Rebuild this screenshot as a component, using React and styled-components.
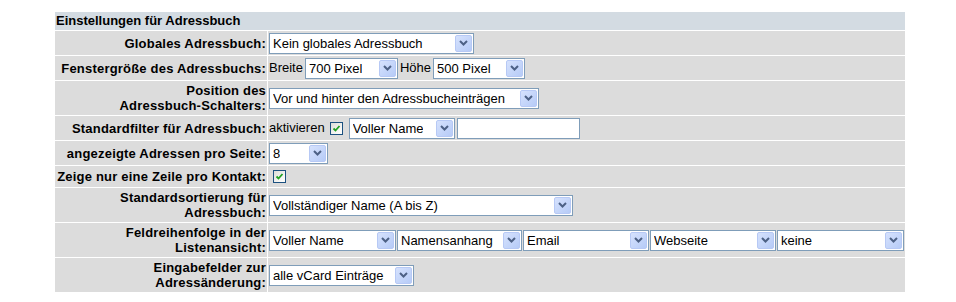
import React from 'react';
import styled, { createGlobalStyle } from 'styled-components';

const GlobalStyle = createGlobalStyle`
  body {
    margin: 0;
    background: #fff;
    font-family: 'Liberation Sans', Arial, sans-serif;
    font-size: 13px;
    color: #000;
  }
`;

const Table = styled.table`
  border-collapse: separate;
  border-spacing: 1px;
  width: 852px;
  margin: 11px 0 0 54px;
  background: #fff;
`;

const HeaderCell = styled.td`
  background: #d3dbe2;
  font-weight: bold;
  height: 18px;
  padding: 0 0 0 1px;
  line-height: 16px;
  text-align: left;
`;

const LabelCell = styled.td`
  width: 211px;
  background: #dcdcdc;
  font-weight: bold;
  letter-spacing: 0.2px;
  text-align: right;
  vertical-align: middle;
  line-height: 15px;
  padding: 0 1px 0 0;
  height: ${p => p.$h || 24}px;
`;

const ValueCell = styled.td`
  background: #dcdcdc;
  vertical-align: middle;
  padding: 0 0 0 1px;
`;

const Controls = styled.div`
  display: flex;
  align-items: center;
  gap: ${p => p.$gap ?? 4}px;
`;

const Text = styled.span`
  line-height: 16px;
  margin-right: ${p => p.$mr || 0}px;
`;

const SelectBox = styled.div`
  box-sizing: border-box;
  width: ${p => p.$w}px;
  height: 21px;
  border: 1px solid #7f9db9;
  background: #fff;
  display: flex;
  align-items: center;
  justify-content: space-between;
  padding: 0 1px 0 3px;
  flex-shrink: 0;
`;

const SelectLabel = styled.span`
  white-space: nowrap;
  overflow: hidden;
  line-height: 17px;
`;

const ArrowButton = styled.span`
  box-sizing: border-box;
  width: 17px;
  height: 17px;
  border: 1px solid #b7c9f5;
  border-radius: 2px;
  background: linear-gradient(135deg, #d6e2fd 0%, #b6cbf7 100%);
  display: flex;
  align-items: center;
  justify-content: center;
  flex-shrink: 0;
`;

const TextInput = styled.div`
  box-sizing: border-box;
  width: ${p => p.$w}px;
  height: 21px;
  border: 1px solid #7f9db9;
  background: #fff;
  margin-left: ${p => p.$ml || 0}px;
`;

const CheckBox = styled.span`
  box-sizing: border-box;
  width: 13px;
  height: 13px;
  border: 1px solid #1c5180;
  background: linear-gradient(135deg, #dcdcd7 0%, #fbfbf9 80%);
  display: flex;
  align-items: center;
  justify-content: center;
  margin: 0 ${p => p.$mr ?? 3}px 0 ${p => p.$ml ?? 4}px;
  flex-shrink: 0;
`;

function Select({ w, children }) {
  return (
    <SelectBox $w={w}>
      <SelectLabel>{children}</SelectLabel>
      <ArrowButton>
        <svg width="9" height="6" viewBox="0 0 9 6">
          <path d="M1 1 L4.5 4.5 L8 1" fill="none" stroke="#4d6185" strokeWidth="2" />
        </svg>
      </ArrowButton>
    </SelectBox>
  );
}

function Check({ ml, mr }) {
  return (
    <CheckBox $ml={ml} $mr={mr}>
      <svg width="9" height="9" viewBox="0 0 9 9">
        <path d="M1.5 4.5 L3.5 6.5 L7.5 2" fill="none" stroke="#21a121" strokeWidth="1.8" />
      </svg>
    </CheckBox>
  );
}

const columns = [
  { label: 'Voller Name', w: 127 },
  { label: 'Namensanhang', w: 125 },
  { label: 'Email', w: 126 },
  { label: 'Webseite', w: 126 },
  { label: 'keine', w: 127 },
];

export default function App() {
  return (
    <>
      <GlobalStyle />
      <Table>
        <tbody>
          <tr>
            <HeaderCell colSpan={2}>Einstellungen für Adressbuch</HeaderCell>
          </tr>
          <tr>
            <LabelCell>Globales Adressbuch:</LabelCell>
            <ValueCell>
              <Controls>
                <Select w={205}>Kein globales Adressbuch</Select>
              </Controls>
            </ValueCell>
          </tr>
          <tr>
            <LabelCell>Fenstergröße des Adressbuchs:</LabelCell>
            <ValueCell>
              <Controls $gap={2}>
                <Text>Breite</Text>
                <Select w={93}>700 Pixel</Select>
                <Text>Höhe</Text>
                <Select w={92}>500 Pixel</Select>
              </Controls>
            </ValueCell>
          </tr>
          <tr>
            <LabelCell $h={34}>Position des<br />Adressbuch-Schalters:</LabelCell>
            <ValueCell>
              <Controls>
                <Select w={270}>Vor und hinter den Adressbucheinträgen</Select>
              </Controls>
            </ValueCell>
          </tr>
          <tr>
            <LabelCell>Standardfilter für Adressbuch:</LabelCell>
            <ValueCell>
              <Controls $gap={0}>
                <Text>aktivieren</Text>
                <Check ml={5} mr={6} />
                <Select w={106}>Voller Name</Select>
                <TextInput $w={123} $ml={2} />
              </Controls>
            </ValueCell>
          </tr>
          <tr>
            <LabelCell>angezeigte Adressen pro Seite:</LabelCell>
            <ValueCell>
              <Controls>
                <Select w={59}>8</Select>
              </Controls>
            </ValueCell>
          </tr>
          <tr>
            <LabelCell $h={21}>Zeige nur eine Zeile pro Kontakt:</LabelCell>
            <ValueCell>
              <Controls>
                <Check />
              </Controls>
            </ValueCell>
          </tr>
          <tr>
            <LabelCell $h={34}>Standardsortierung für<br />Adressbuch:</LabelCell>
            <ValueCell>
              <Controls>
                <Select w={304}>Vollständiger Name (A bis Z)</Select>
              </Controls>
            </ValueCell>
          </tr>
          <tr>
            <LabelCell $h={34}>Feldreihenfolge in der<br />Listenansicht:</LabelCell>
            <ValueCell>
              <Controls $gap={1}>
                {columns.map(c => (
                  <Select key={c.label} w={c.w}>{c.label}</Select>
                ))}
              </Controls>
            </ValueCell>
          </tr>
          <tr>
            <LabelCell $h={34}>Eingabefelder zur<br />Adressänderung:</LabelCell>
            <ValueCell>
              <Controls>
                <Select w={145}>alle vCard Einträge</Select>
              </Controls>
            </ValueCell>
          </tr>
        </tbody>
      </Table>
    </>
  );
}
